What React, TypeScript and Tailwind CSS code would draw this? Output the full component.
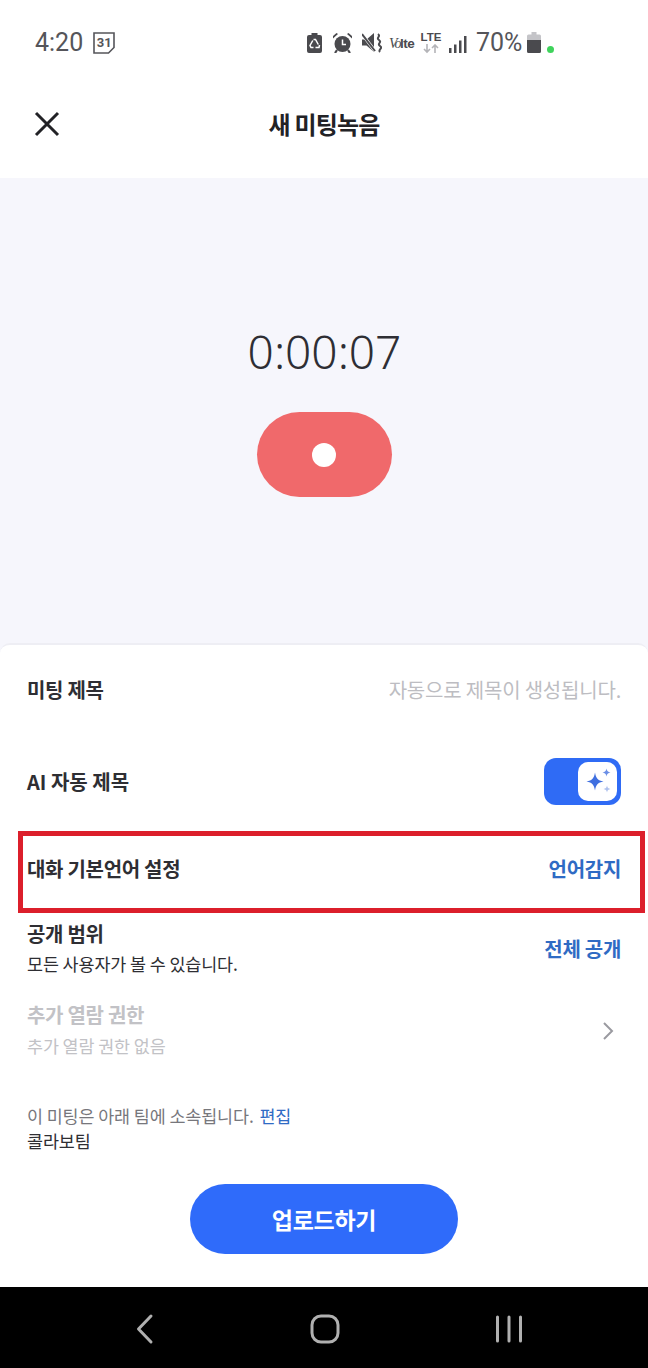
const font = "[font-family:'Noto_Sans_CJK_KR','Noto_Sans',sans-serif]";

const StatusIcons = () => (
  <div className="flex items-center">
    {/* recycle battery */}
    <svg width="15" height="20" viewBox="0 0 15 20">
      <path d="M4.500 0h6v2h2.500A2 2 0 0 1 15 4v14a2 2 0 0 1-2 2H2a2 2 0 0 1-2-2V4a2 2 0 0 1 2-2h2.500z" fill="#4a4a4e" />
      <path d="M5.800 7.500L3 12.500l1 2h2.500M6.500 6.500h2l2.800 5M12.500 12l-.5 2.500H8.500" stroke="#fff" strokeWidth="1.500" fill="none" />
    </svg>
    {/* alarm */}
    <svg width="19" height="20" viewBox="0 0 19 20" className="ml-[11px]">
      <circle cx="9.500" cy="11" r="8" fill="#4a4a4e" />
      <path d="M9.500 6.500v5h3.500" stroke="#fff" strokeWidth="1.500" fill="none" />
      <path d="M0 5.500L5 1 3.500 0 0 3zM19 5.500L14 1l1.500-1L19 3z" fill="#4a4a4e" />
      <path d="M4 17l-2 3M15 17l2 3" stroke="#4a4a4e" strokeWidth="2.200" fill="none" />
    </svg>
    {/* vibrate mute */}
    <svg width="20" height="20" viewBox="0 0 20 20" className="ml-[10px]">
      <path d="M0 6.500h4.500L12 0v19l-7.500-6.500H0z" fill="#4a4a4e" />
      <path d="M0 1l13 17" stroke="#fff" strokeWidth="3" />
      <path d="M0 1l13 17" stroke="#4a4a4e" strokeWidth="2" />
      <path d="M16 1c3.500 2.500-2.500 3.500 1 6s-2.500 3.500 1 6-2.500 3.500 0 6" stroke="#4a4a4e" strokeWidth="2" fill="none" />
    </svg>
    <span className="ml-[7px] w-[28px] whitespace-nowrap text-[14px] leading-none text-[#4a4a4e]">
      <span className="font-['Liberation_Serif',serif] italic tracking-[-1.500px]">Vo</span>
      <span className="font-['Liberation_Sans',sans-serif] font-bold tracking-[-0.500px] text-[13.500px]">lte</span>
    </span>
    <div className="ml-[4px] flex w-[20px] flex-col items-center">
      <span className="font-['Liberation_Sans',sans-serif] text-[11.500px] font-bold leading-[11px] text-[#4a4a4e]">LTE</span>
      <svg width="18" height="10" viewBox="0 0 18 10" className="mt-[1px]">
        <path d="M5 0v8M2 5l3 3 3-3" stroke="#b4b4b8" strokeWidth="1.600" fill="none" />
        <path d="M13 9V1M10 4l3-3 3 3" stroke="#b4b4b8" strokeWidth="1.600" fill="none" />
      </svg>
    </div>
    <svg width="18" height="17" viewBox="0 0 18 17" className="ml-[8px] mt-[3px]">
      <rect x="0" y="12" width="2.500" height="5" fill="#4a4a4e" />
      <rect x="5" y="8.500" width="2.500" height="8.500" fill="#4a4a4e" />
      <rect x="10" y="4.500" width="2.500" height="12.500" fill="#4a4a4e" />
      <rect x="15" y="0" width="2.500" height="17" fill="#4a4a4e" />
    </svg>
    <span className="ml-[9px] w-[46px] font-['Roboto',sans-serif] text-[25px] leading-none text-[#55555a]">70%</span>
    <svg width="14" height="21" viewBox="0 0 14 21" className="ml-[5px]">
      <path d="M4.500 0h5v2.500h3A1.500 1.500 0 0 1 14 4v5H0V4a1.500 1.500 0 0 1 1.500-1.500h3z" fill="#c4c4c8" />
      <path d="M0 8h14v11.500a1.500 1.500 0 0 1-1.500 1.500h-11A1.500 1.500 0 0 1 0 19.500z" fill="#4a4a4e" />
    </svg>
    <span className="ml-[6px] mt-[14px] h-[7px] w-[7px] rounded-full bg-[#3fd35c]" />
  </div>
);

const CalendarIcon = () => (
  <div className="relative ml-[10px] h-[22px] w-[22px]">
    <svg width="22" height="22" viewBox="0 0 22 22" className="absolute inset-0">
      <path d="M1 1h20v14.500L15.500 21H1z" stroke="#55555a" strokeWidth="1.600" fill="none" />
    </svg>
    <span className="absolute inset-0 flex items-center justify-center pb-px font-['Roboto',sans-serif] text-[13px] font-bold leading-none text-[#55555a]">31</span>
  </div>
);

const Sparkles = () => (
  <svg width="26" height="26" viewBox="0 0 26 26">
    <path d="M10 4.500c1 5.800 2.700 7.800 8.500 9-5.800 1.200-7.500 3.200-8.500 9-1-5.800-2.700-7.800-8.500-9 5.800-1.200 7.500-3.200 8.500-9z" fill="#3f6fe0" />
    <path d="M21.500.500c.5 2.600 1.400 3.500 4 4-2.600.5-3.500 1.400-4 4-.5-2.600-1.400-3.500-4-4 2.600-.5 3.500-1.400 4-4z" fill="#6b8fe6" />
    <path d="M22 17.500c.5 2.400 1.200 3.100 3.500 3.500-2.300.4-3 1.100-3.500 3.500-.5-2.400-1.200-3.100-3.500-3.500 2.300-.4 3-1.100 3.500-3.500z" fill="#b0c2ee" />
  </svg>
);

export default function App() {
  return (
    <div className={`${font} flex h-[1368px] w-[648px] flex-col overflow-hidden bg-white`}>
      {/* status bar */}
      <div className="flex h-[86px] items-start justify-between pl-[35px] pr-[94px] pt-[30px]">
        <div className="flex items-center">
          <span className="font-['Roboto',sans-serif] text-[25px] leading-[25px] text-[#55555a]">4:20</span>
          <CalendarIcon />
        </div>
        <StatusIcons />
      </div>

      {/* header */}
      <div className="relative flex h-[92px] items-start justify-center pt-[18px]">
        <svg width="26" height="26" viewBox="0 0 26 26" className="absolute left-[34px] top-[25px]">
          <path d="M2 2l22 22M24 2L2 24" stroke="#222226" strokeWidth="3" fill="none" />
        </svg>
        <h1 className="text-[24px] leading-[40px] font-bold tracking-[-0.800px] text-[#222226]">새 미팅녹음</h1>
      </div>

      {/* recorder */}
      <div className="flex h-[475px] flex-col items-center bg-[#f6f6fc] pt-[143px]">
        <div className="ml-[1px] font-['Noto_Sans',sans-serif] text-[46px] font-light leading-[60px] text-[#2e2e34]">0:00:07</div>
        <button className="mt-[31px] flex h-[85px] w-[135px] items-center justify-center rounded-full bg-[#f0696b]">
          <span className="h-6 w-6 rounded-full bg-white" />
        </button>
      </div>

      {/* form sheet */}
      <div className="relative -mt-[10px] flex flex-1 flex-col rounded-t-[10px] border-t-2 border-[#eeeef4] bg-white">
        <div className="flex h-[90px] items-center justify-between px-[27px]">
          <span className="text-[20px] font-bold tracking-[-0.300px] text-[#2e2e33]">미팅 제목</span>
          <span className="text-[20px] tracking-[-0.200px] text-[#bdbdc2]">자동으로 제목이 생성됩니다.</span>
        </div>
        <div className="flex h-[92px] items-center justify-between pl-[27px] pr-[27px]">
          <span className="mt-[2px] text-[20px] font-bold text-[#2e2e33]">AI 자동 제목</span>
          <div className="flex h-[47px] w-[77px] justify-end rounded-[12px] bg-[#2f6bf5] p-[4px]">
            <div className="flex h-[39px] w-[39px] items-center justify-center rounded-[10px] bg-white">
              <Sparkles />
            </div>
          </div>
        </div>

        {/* highlighted row */}
        <div className="ml-[18px] mr-[3px] mt-[4px] flex h-[82px] items-center justify-between border-[5px] border-[#dc1f2b] pb-[7px] pl-[4px] pr-[19px]">
          <span className="text-[20px] font-bold tracking-[-0.300px] text-[#2e2e33]">대화 기본언어 설정</span>
          <span className="text-[20px] font-bold tracking-[-0.300px] text-[#2f6bc4]">언어감지</span>
        </div>

        <div className="mt-[6px] flex items-center justify-between px-[27px]">
          <div>
            <div className="text-[20px] leading-[30px] font-bold tracking-[-0.300px] text-[#2e2e33]">공개 범위</div>
            <div className="text-[17.400px] leading-[30px] tracking-[-0.100px] text-[#2e2e33]">모든 사용자가 볼 수 있습니다.</div>
          </div>
          <span className="text-[20px] font-bold tracking-[-0.300px] text-[#2f6bc4]">전체 공개</span>
        </div>

        <div className="mt-[21px] flex items-center justify-between pl-[27px] pr-[34px]">
          <div>
            <div className="text-[20px] leading-[30px] font-bold tracking-[-0.300px] text-[#c2c2c6]">추가 열람 권한</div>
            <div className="text-[17.400px] leading-[31px] tracking-[-0.100px] text-[#c2c2c6]">추가 열람 권한 없음</div>
          </div>
          <svg width="12" height="18" viewBox="0 0 12 18">
            <path d="M2 1l8 8-8 8" stroke="#9a9aa0" strokeWidth="2" fill="none" />
          </svg>
        </div>

        <div className="mt-[42px] px-[27px]">
          <div className="text-[17.400px] leading-[25px] tracking-[-0.100px] text-[#77777c]">
            이 미팅은 아래 팀에 소속됩니다. <span className="ml-[2px] text-[#2f6bc4]">편집</span>
          </div>
          <div className="text-[17.400px] leading-[25px] tracking-[-0.100px] text-[#2e2e33]">콜라보팀</div>
        </div>

        <div className="mt-[31px] flex justify-center">
          <button className="h-[70px] w-[268px] rounded-full bg-[#2f6bfa] text-[23px] font-bold tracking-[-0.300px] text-white">
            업로드하기
          </button>
        </div>
      </div>

      {/* android nav */}
      <div className="flex h-[81px] items-center justify-between bg-black pl-[135px] pr-[125px] pt-[3px]">
        <svg width="20" height="32" viewBox="0 0 20 32">
          <path d="M16 3L3.500 16 16 29" stroke="#b0b0b0" strokeWidth="3" strokeLinecap="round" strokeLinejoin="round" fill="none" />
        </svg>
        <svg width="30" height="30" viewBox="0 0 30 30">
          <rect x="2" y="2" width="26" height="26" rx="9" stroke="#b0b0b0" strokeWidth="3" fill="none" />
        </svg>
        <svg width="28" height="28" viewBox="0 0 28 28">
          <path d="M2.500 2v24M14 2v24M25.500 2v24" stroke="#b0b0b0" strokeWidth="3" strokeLinecap="round" fill="none" />
        </svg>
      </div>
    </div>
  );
}
